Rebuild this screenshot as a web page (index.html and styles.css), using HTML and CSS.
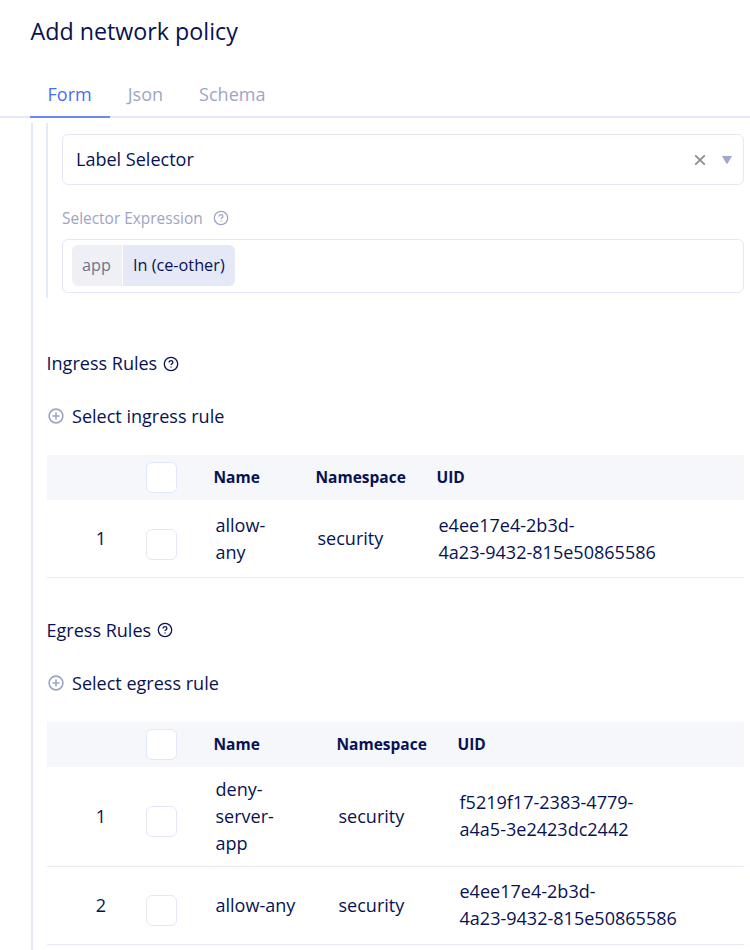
FILE: index.html
```html
<!DOCTYPE html>
<html lang="en">
<head>
<meta charset="utf-8">
<title>Add network policy</title>
<link rel="stylesheet" href="styles.css">
</head>
<body>
<svg class="defs" width="0" height="0" aria-hidden="true">
  <symbol id="help" viewBox="0 0 16 16"><circle cx="8" cy="8" r="6.7"/><path d="M6.1 6.6c0-1.1.8-1.9 1.9-1.9s1.9.7 1.9 1.7c0 1.2-1.9 1.4-1.9 2.7M8 10.5v1.1"/></symbol>
  <symbol id="plus" viewBox="0 0 16 16"><circle cx="8" cy="8" r="6.9"/><path d="M8 4.4v7.2M4.4 8h7.2"/></symbol>
</svg>
<header class="header">
  <h1 class="title">Add network policy</h1>
  <nav class="tabs">
    <a class="tab tab-active">Form</a>
    <a class="tab">Json</a>
    <a class="tab">Schema</a>
  </nav>
</header>
<main class="form">
  <section class="selector">
    <div class="select">
      <span>Label Selector</span>
      <svg class="clear" viewBox="0 0 12 12"><path d="M1.8 1.8l8.4 8.4M10.2 1.8l-8.4 8.4"/></svg>
      <svg class="caret" viewBox="0 0 10 8"><path d="M0 0h10L5.8 7.2Q5 8.4 4.2 7.2z"/></svg>
    </div>
    <div class="field-label">Selector Expression <svg class="icon"><use href="#help"/></svg></div>
    <div class="expression"><span class="key">app</span><span class="value">In (ce-other)</span></div>
  </section>

  <section class="rules">
    <h2 class="heading">Ingress Rules <svg class="icon"><use href="#help"/></svg></h2>
    <div class="add"><svg class="icon"><use href="#plus"/></svg>Select ingress rule</div>
    <div class="table ingress">
      <div class="row head"><span></span><i class="check"></i><b>Name</b><b>Namespace</b><b>UID</b></div>
      <div class="row two"><span class="num">1</span><i class="check"></i><span>allow-<br>any</span><span>security</span><span>e4ee17e4-2b3d-<br>4a23-9432-815e50865586</span></div>
    </div>
  </section>

  <section class="rules">
    <h2 class="heading">Egress Rules <svg class="icon"><use href="#help"/></svg></h2>
    <div class="add"><svg class="icon"><use href="#plus"/></svg>Select egress rule</div>
    <div class="table egress">
      <div class="row head"><span></span><i class="check"></i><b>Name</b><b>Namespace</b><b>UID</b></div>
      <div class="row three"><span class="num">1</span><i class="check"></i><span>deny-<br>server-<br>app</span><span>security</span><span>f5219f17-2383-4779-<br>a4a5-3e2423dc2442</span></div>
      <div class="row two"><span class="num">2</span><i class="check"></i><span>allow-any</span><span>security</span><span>e4ee17e4-2b3d-<br>4a23-9432-815e50865586</span></div>
    </div>
  </section>
</main>
</body>
</html>
```
FILE: styles.css
```css
* { box-sizing: border-box; }
body {
  margin: 0;
  height: 950px;
  overflow: hidden;
  background: #fff;
  color: #081252;
  font: 18.05px/27px "Open Sans", "Noto Sans", sans-serif;
}
.defs { display: block; }
.header { height: 118px; border-bottom: 2px solid #e6e9f9; padding-left: 29.5px; }
.title { margin: 0; padding: 14px 0 0 1px; height: 76px; font-size: 23.25px; line-height: 34px; font-weight: 400; }
.tabs { display: flex; height: 42px; color: #9ea5c3; }
.tab { height: 42px; padding: 5px 18px 0; }
.tab-active { color: #4a6cf7; border-bottom: 2px solid #6b88f5; }
.form { margin: 5px 0 0 31px; border-left: 2px solid #e4e8f8; padding-left: 13px; height: 827px; }
.selector { border-left: 2px solid #e4e8f8; height: 175px; padding: 11px 6px 0 14px; }
.select {
  display: flex; align-items: center; height: 51px; padding: 0 11px 0 13px;
  border: 1.5px solid #e4e7fa; border-radius: 6px;
}
.clear { width: 12px; height: 12px; margin-left: auto; fill: none; stroke: #8f8f8f; stroke-width: 1.9; stroke-linecap: round; }
.caret { width: 10px; height: 8px; margin-left: 16px; fill: #a1a7c8; }
.field-label { display: flex; align-items: center; gap: 10px; height: 27px; margin-top: 20px; font-size: 15.45px; color: #9ea5c3; }
.field-label .icon { margin-top: -1px; }
.icon { width: 16px; height: 16px; fill: none; stroke: currentColor; stroke-width: 1.3; flex: none; }
.expression {
  display: flex; align-items: center; height: 54px; margin-top: 7px; padding: 0 0 2px 9px;
  border: 1.5px solid #e4e7fa; border-radius: 6px; font-size: 16.25px;
}
.key, .value { height: 41px; line-height: 40px; padding: 0 10px; }
.key { background: #eff0f5; color: #6b738f; border-radius: 6px 0 0 6px; margin-right: 1px; padding-right: 11px; }
.value { background: #e4e8f7; border-radius: 0 6px 6px 0; }
.rules { margin-right: 6px; padding: 52px 0 0 0.5px; }
.rules + .rules { padding-top: 38.5px; }
.heading { display: flex; align-items: center; gap: 6px; height: 27px; margin: 0; font-size: 18.05px; font-weight: 400; }
.add { display: flex; align-items: center; gap: 8.5px; height: 27px; margin-top: 26px; }
.add .icon { color: #9ea5c3; stroke-width: 1.6; margin: -1px 0 0 1px; }
.table { margin-top: 25px; }
.row { display: grid; align-items: center; border-bottom: 1.5px solid #e6e9f7; }
.ingress .row { grid-template-columns: 99.5px 69.5px 102px 121px 1fr; }
.egress .row { grid-template-columns: 99.5px 69.5px 123px 121px 1fr; }
.head { height: 45px; background: #f6f7fa; border: 0; font-size: 15.5px; }
.head b { position: relative; left: -2px; }
.row.head .check { margin-top: 0; }
.two { height: 78px; }
.three { height: 100px; }
.num { text-align: right; padding-right: 40px; }
.check { width: 31px; height: 31px; margin-top: 11px; border: 1.5px solid #e4e7fa; border-radius: 6px; background: #fff; }
```
